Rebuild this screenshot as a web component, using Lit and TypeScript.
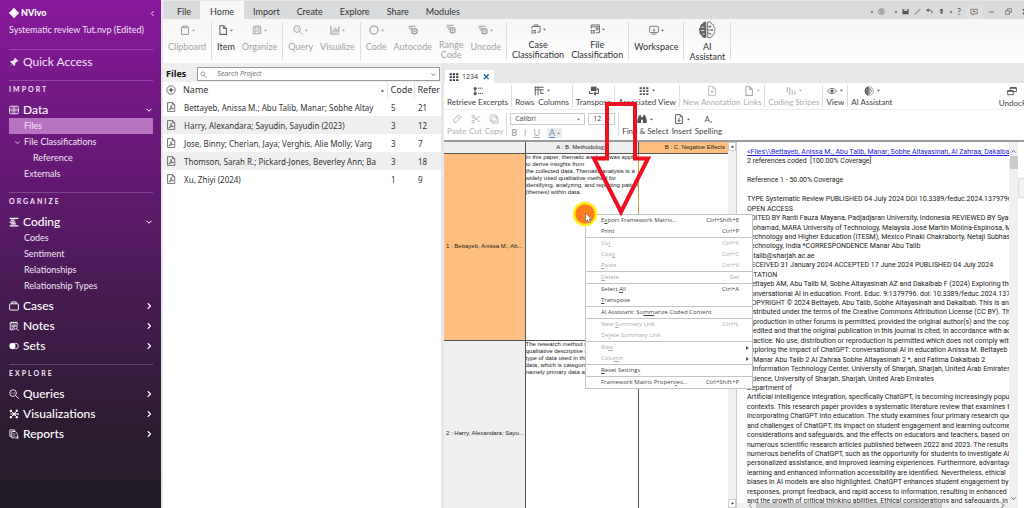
import { LitElement, html, svg, css, nothing, TemplateResult } from "lit";
import { customElement, property } from "lit/decorators.js";
import { classMap } from "lit/directives/class-map.js";

/* ---------- Icons: every glyph is drawn on a 16 x 16 grid ---------- */

const glyphs: Record<string, TemplateResult> = {
  logo: svg`<g fill="none" stroke="currentColor" stroke-width="2.6"><path d="M8 1.5 10.3 4 8 6.3 5.7 4zM8 9.7 10.3 12 8 14.5 5.7 12zM1.5 8 4 5.7 6.3 8 4 10.3zM9.7 8 12 5.7 14.5 8 12 10.3z"/></g>`,
  pin: svg`<path d="M9.5 1 15 6.500 13.600 7.600 12.600 7.300 9.900 10 9.800 13 8.500 14.300 5.300 11 1 15.300 .7 15 4.900 10.700 1.700 7.500 3 6.200 6 6.100 8.700 3.400 8.400 2.300z" fill="currentColor"/>`,
  data: svg`<g fill="none" stroke="currentColor" stroke-width="1.400"><rect x="1" y="2" width="14" height="12" rx="1.500"/><path d="M1 8h14M8 2v12M4 5h2M10 5h2M4 11h2M10 11h2"/></g>`,
  coding: svg`<path d="M1 2h14M1 8h9M1 14h14M3 5h6M3 11h8" stroke="currentColor" stroke-width="2"/>`,
  case: svg`<g fill="none" stroke="currentColor" stroke-width="1.500"><rect x="1" y="4.500" width="14" height="10" rx="1"/><path d="M4.500 4.500V1.500h7v3"/></g>`,
  note: svg`<g fill="none" stroke="currentColor" stroke-width="1.400"><path d="M8 14H2V2.500h11V8M4 1v3M7.500 1v3M11 1v3M4 6.500h7M4 9h4M4 11.500h3"/><circle cx="10.500" cy="10.500" r="2.500"/><path d="m12.500 12.500 3 3"/></g>`,
  sets: svg`<circle cx="5.500" cy="8" r="5" fill="currentColor"/><circle cx="10.500" cy="8" r="4.500" fill="none" stroke="currentColor" stroke-width="1.300"/>`,
  query: svg`<g fill="none" stroke="currentColor" stroke-width="1.400"><circle cx="6.500" cy="6.500" r="5.300"/><path d="m10.500 10.500 5 5M4 6.500h1.200M6 6.500h1.200M8 6.500h1.200"/></g>`,
  network: svg`<g fill="none" stroke="currentColor" stroke-width="1.500"><path d="m3 3 10 10M13 3 3 13M8 8h6M2 8h3"/></g><g fill="currentColor"><circle cx="8" cy="8" r="2.600"/><circle cx="3" cy="3" r="1.900"/><circle cx="12.500" cy="2.800" r="1.900"/><circle cx="3" cy="13" r="1.900"/><circle cx="12.500" cy="13" r="1.900"/><circle cx="14.500" cy="8" r="1.400"/></g>`,
  report: svg`<g fill="none" stroke="currentColor" stroke-width="1.400"><path d="M4 12H1.500V1.500H9V3"/><path d="M4.500 4H10l3 3v2M4.500 4v10H9M7 8h3M7 11h2"/></g><path d="M10.500 12h1.500v3.500h-1.500zM13 10h1.800v5.500H13z" fill="currentColor"/>`,
  down: svg`<path d="m3 5.500 5 5 5-5" fill="none" stroke="currentColor" stroke-width="2"/>`,
  right: svg`<path d="m5.500 2.500 5.500 5.500-5.500 5.500" fill="none" stroke="currentColor" stroke-width="2.200"/>`,
  left: svg`<path d="M10.500 2.500 5.500 8l5 5.500" fill="none" stroke="currentColor" stroke-width="1.800"/>`,
  clipboard: svg`<g fill="none" stroke="currentColor" stroke-width="1.600"><path d="M5 3H2.500v12h11V3H11"/><path d="M5.500 1.500h5v3h-5z"/></g>`,
  page: svg`<g fill="none" stroke="currentColor" stroke-width="1.700"><path d="M3 1.200h6l4.500 4.500v9.300H3z"/><path d="M9 1.200v4.500h4.500"/></g>`,
  organize: svg`<g fill="none" stroke="currentColor" stroke-width="1.300"><path d="M2 3h3v11H2zM5 3V1.500h6V14H5M11 3h3v11h-3M7 4h2M7 7h2M7 10h2"/></g>`,
  bars: svg`<path d="M1.500 1v13.500H15M5 12V7.500M8 12V4M11 12V6.500M14 12V2.500" fill="none" stroke="currentColor" stroke-width="1.700"/>`,
  circle: svg`<circle cx="8" cy="8" r="6.500" fill="none" stroke="currentColor" stroke-width="1.800"/>`,
  autocode: svg`<path d="M1 2h11M1 5h6M3 8h3" stroke="currentColor" stroke-width="1.500"/><circle cx="10.500" cy="10" r="4.200" fill="none" stroke="currentColor" stroke-width="2"/><circle cx="10.500" cy="10" r="1.700" fill="currentColor"/>`,
  range: svg`<path d="M1 2h11M1 5h6M3 8h3" stroke="currentColor" stroke-width="1.500"/><circle cx="10.500" cy="10" r="4.200" fill="none" stroke="currentColor" stroke-width="1.800"/><path d="M8 10h5M10.500 8v4" stroke="currentColor" stroke-width="1.300"/>`,
  uncode: svg`<path d="M1 2h11M1 5h6M3 8h3" stroke="currentColor" stroke-width="1.500"/><circle cx="10.500" cy="10" r="4.200" fill="none" stroke="currentColor" stroke-width="1.800"/><path d="m8.800 8.300 3.400 3.400M12.200 8.300 8.800 11.700" stroke="currentColor" stroke-width="1.400"/>`,
  caseclass: svg`<g fill="none" stroke="currentColor" stroke-width="1.500"><path d="M1.500 7.500V4h13v9H9.500M5 4V1.500h6V4"/></g><path d="M1 9.500h3v2.300H1zM5 9.500h3v2.300H5zM1 13h3v2.300H1zM5 13h3v2.300H5z" fill="currentColor"/>`,
  fileclass: svg`<g fill="none" stroke="currentColor" stroke-width="1.500"><path d="M2 7.500v-6h13V14H9.500M2 4.500h13M11 4.500v6M9 8h6"/></g><path d="M1 9.500h3v2.300H1zM5 9.500h3v2.300H5zM1 13h3v2.300H1zM5 13h3v2.300H5z" fill="currentColor"/>`,
  workspace: svg`<g fill="none" stroke="currentColor" stroke-width="1.300"><rect x="1" y="2" width="14" height="10" rx="1"/><path d="M4 14.500h8M8 5v5M6 8l2 2 2-2"/></g>`,
  brain: svg`<path d="M7.400 1C5.500.3 4.300 1.300 4 2.500 2.300 2.700 1.800 4.100 2.100 5.300.7 6.200.5 8.100 1.400 9.200.8 10.800 1.700 12.300 3.100 12.600c.4 2 2.700 3 4.300 2.100z" fill="currentColor"/><path d="M3 5.500h2.500M2.500 8.500h3M4 11.500h2" stroke="#fbfbfb" stroke-width=".7"/><g fill="none" stroke="currentColor" stroke-width=".8"><path d="M8.600 1c1.900-.7 3.100.3 3.400 1.500 1.700.2 2.200 1.600 1.900 2.800 1.400.9 1.600 2.800.7 3.900.6 1.600-.3 3.100-1.700 3.400-.4 2-2.700 3-4.300 2.100zM8.600 5H11v-1M8.600 8H13M8.600 11h2.600v1.500"/></g><circle cx="11" cy="5" r=".8" fill="currentColor"/><circle cx="12.500" cy="8" r=".8" fill="currentColor"/>`,
  search: svg`<circle cx="6.500" cy="6.500" r="4.500" fill="none" stroke="currentColor" stroke-width="1.300"/><path d="m10 10 5 5" stroke="currentColor" stroke-width="1.600"/>`,
  target: svg`<circle cx="8" cy="8" r="6.700" fill="none" stroke="currentColor" stroke-width="1.300"/><path d="M8 4v8M4 8h8" stroke="currentColor" stroke-width="1.200"/><circle cx="8" cy="8" r="2.300" fill="currentColor"/>`,
  pdf: svg`<g fill="none" stroke="currentColor" stroke-width="1.300"><path d="M2.500 1h8l3.500 3.500V15H2.500zM10.500 1v3.500H14"/><path d="M4.500 12.500C7.500 11 8.500 8 8 5.500c.3 3 2 5 4 5-3-.3-5 .5-7.500 2"/></g>`,
  grid: svg`<path d="M1 2h3.500v3H1zM6.200 2h3.500v3H6.200zM11.500 2H15v3h-3.500zM1 6.700h3.500v3H1zM6.200 6.700h3.500v3H6.200zM11.500 6.700H15v3h-3.500zM1 11.500h3.500v3H1zM6.200 11.500h3.500v3H6.200zM11.500 11.500H15v3h-3.500z" fill="currentColor"/>`,
  close: svg`<path d="m2 3 11 11M13 3 2 14" stroke="currentColor" stroke-width="3"/>`,
  retrieve: svg`<g fill="currentColor"><circle cx="3.500" cy="4" r="2.600"/><circle cx="3.500" cy="12" r="2.600"/></g><path d="M8 3.500h2M11 3.500h2M14 3.500h1.500M8 12h2M11 12h2M14 12h1.500M2 8h3" stroke="currentColor" stroke-width="1.600"/>`,
  columns: svg`<path d="M1 2h14.500M1 6h14.500M2 1v14M6.500 1v14M11 6v6h4" fill="none" stroke="currentColor" stroke-width="1.500"/>`,
  transpose: svg`<path d="M3 1h9v7H3z" fill="currentColor"/><path d="M12 5h3v7H9M11 9l-3 3 3 3M1 8v4h5" fill="none" stroke="currentColor" stroke-width="1.700"/>`,
  annotation: svg`<g fill="none" stroke="currentColor" stroke-width="1.200"><path d="M2.500 1H10l3.500 3.500V15h-11zM10 1v3.500h3.500M8 6.500v5M5.500 9h5"/></g>`,
  stripes: svg`<path d="M2 2v9M6 2v12M10 6v8M14 8v6" stroke="currentColor" stroke-width="1.600"/>`,
  eye: svg`<path d="M.8 8C4 2.500 12 2.500 15.200 8 12 13.500 4 13.500.8 8z" fill="none" stroke="currentColor" stroke-width="1.200"/><circle cx="8" cy="8" r="2.600" fill="currentColor"/>`,
  undock: svg`<path d="M5 3h10v6H5z" fill="none" stroke="currentColor" stroke-width="1.500"/><path d="M5 3h10" stroke="currentColor" stroke-width="2.500"/><path d="M1 7.500h9V14H1z" fill="#fff" stroke="currentColor" stroke-width="1.500"/><path d="M1 8h9" stroke="currentColor" stroke-width="2.500"/>`,
  paste: svg`<path d="M10 1.500 15 5l-3 3-4-4zM8 4 2.500 8.500 4 14l4-1.500L12 8" fill="none" stroke="currentColor" stroke-width="1.300"/>`,
  cut: svg`<g fill="none" stroke="currentColor" stroke-width="1.300"><circle cx="3.500" cy="4" r="2"/><circle cx="3.500" cy="12" r="2"/><path d="M5 5.500 15 13M5 10.500 15 3"/></g>`,
  copy: svg`<g fill="none" stroke="currentColor" stroke-width="1.200"><rect x="1.500" y="1.500" width="10" height="10" rx="1.500"/><rect x="4.500" y="4.500" width="10" height="10" rx="1.500"/></g>`,
  find: svg`<path d="M3 2h3.500v3h3V2H13l2.500 7v5.500H9.500V9h-3v5.500H.5V9z" fill="currentColor"/>`,
  insert: svg`<path d="M2.500 1H10l3.500 3.500V15h-11zM10 1v3.500h3.500M8 6v6M5.500 9.500 8 12l2.500-2.500" fill="none" stroke="currentColor" stroke-width="1.500"/>`,
  user: svg`<g fill="none" stroke="currentColor" stroke-width="1.300"><circle cx="8" cy="8" r="6.500"/><circle cx="8" cy="6.500" r="2.300"/><path d="M4 13c1-3.500 7-3.500 8 0"/></g>`,
  save: svg`<path d="M1 2h3v5h8V2h3v12H1zM6 2h1.500v3H6z" fill="currentColor"/>`,
  pen: svg`<path d="M2 14 13 2l1.500 1.500L3 14.500z" fill="none" stroke="currentColor" stroke-width="1"/>`,
  undo: svg`<path d="M2 5h7c4 0 5 3 5 7" fill="none" stroke="currentColor" stroke-width="2.200"/><path d="M6 .5.5 5 6 9.500z" fill="currentColor"/>`,
  redo: svg`<path d="M5 2h6v5H5zM3.500 8h9L8 14z" fill="currentColor"/>`,
  chat: svg`<path d="M1.500 2.500h13v9H9l-3 3v-3H1.500zM5 7h6M8 4.500v5" fill="none" stroke="currentColor" stroke-width="1.300"/>`,
  minimize: svg`<path d="M2 9h12" stroke="currentColor" stroke-width="1.800"/>`,
  restore: svg`<path d="M1.500 6h8.500v8.500H1.500zM5.500 6V1.500H14.500V10H10" fill="none" stroke="currentColor" stroke-width="1.400"/>`,
};

const icon = (name: string, size = "s10") =>
  html`<svg class="icon ${size}" viewBox="0 0 16 16" aria-hidden="true">${glyphs[name]}</svg>`;

const caret = html`<svg class="caret" viewBox="0 0 4 3" aria-hidden="true"><path d="M0 .5h4L2 2.800z" fill="currentColor" /></svg>`;

const iconStyles = css`
  .icon { display: block; flex: none; }
  .s7 { width: 7px; height: 7px; }
  .s8 { width: 8px; height: 8px; }
  .s10 { width: 10px; height: 10px; }
  .s18 { width: 18px; height: 18px; }
  .caret { display: block; flex: none; width: 3px; height: 3px; }
  * { box-sizing: border-box; }
  button, input, select { font: inherit; color: inherit; background: none; border: 0; margin: 0; padding: 0; border-radius: 0; }
  button { display: block; text-align: left; }
  a { color: inherit; text-decoration: none; }
`;

/* ---------- Sidebar ---------- */

interface NavEntry {
  label: string;
  icon: string;
  children?: { label: string; level?: number; open?: boolean; active?: boolean }[];
}

const sections: { title: string; items: NavEntry[] }[] = [
  {
    title: "IMPORT",
    items: [
      {
        label: "Data",
        icon: "data",
        children: [
          { label: "Files", active: true },
          { label: "File Classifications", open: true },
          { label: "Reference", level: 2 },
          { label: "Externals" },
        ],
      },
    ],
  },
  {
    title: "ORGANIZE",
    items: [
      {
        label: "Coding",
        icon: "coding",
        children: [{ label: "Codes" }, { label: "Sentiment" }, { label: "Relationships" }, { label: "Relationship Types" }],
      },
      { label: "Cases", icon: "case" },
      { label: "Notes", icon: "note" },
      { label: "Sets", icon: "sets" },
    ],
  },
  {
    title: "EXPLORE",
    items: [
      { label: "Queries", icon: "query" },
      { label: "Visualizations", icon: "network" },
      { label: "Reports", icon: "report" },
    ],
  },
];

@customElement("nv-sidebar")
export class NvSidebar extends LitElement {
  static styles = [
    iconStyles,
    css`
      :host {
        display: block;
        padding: 1px 8px 0 9px;
        color: #f1e6f4;
        font: 9px/16px Lato, sans-serif;
        background: linear-gradient(#88189c, #5f1a6e 38%, #431b4d 62%, #2c1b31 84%, #221c26);
        overflow: hidden;
      }
      .brand { display: flex; align-items: center; gap: 2px; height: 24px; font-weight: 900; color: #fff; }
      .brand button { margin-left: auto; margin-right: -3px; }
      .project { height: 24px; line-height: 10px; }
      .rule { height: 1px; border: 0; margin: 0; background: #ffffff33; }
      .quick { display: flex; align-items: center; gap: 4px; height: 24px; font-size: 12px; margin-bottom: 6px; }
      .title { height: 16px; margin: 0 0 5px; font-size: 7px; font-weight: 700; letter-spacing: 2px; }
      .section + .section { margin-top: 10px; }
      .nav { display: flex; align-items: center; gap: 4px; width: 100%; height: 16px; font-size: 12px; font-weight: 500; color: #fff; }
      .nav .chev { margin-left: auto; }
      .entry + .entry { margin-top: 4px; }
      .child { display: flex; align-items: center; height: 16px; padding-left: 15px; }
      .child.level2 { padding-left: 24px; }
      .child.active { background: #b673c0; }
      .child.open { padding-left: 5px; gap: 3px; }
    `,
  ];

  render() {
    return html`
      <div class="brand">${icon("logo")}<span>NVivo</span><button aria-label="Collapse">${icon("left", "s7")}</button></div>
      <div class="project">Systematic review Tut.nvp (Edited)</div>
      <hr class="rule" />
      <a class="quick" href="#">${icon("pin")}<span>Quick Access</span></a>
      ${sections.map(
        (s) => html`<section class="section">
          <hr class="rule" />
          <h2 class="title">${s.title}</h2>
          ${s.items.map(
            (n) => html`<div class="entry">
              <button class="nav">${icon(n.icon)}<span>${n.label}</span><span class="chev">${icon(n.children ? "down" : "right", "s8")}</span></button>
              ${n.children?.map(
                (c) => html`<a href="#" class=${classMap({ child: true, active: !!c.active, open: !!c.open, level2: c.level === 2 })}
                  >${c.open ? icon("down", "s7") : nothing}<span>${c.label}</span></a>`
              )}
            </div>`
          )}
        </section>`
      )}
    `;
  }
}

/* ---------- Ribbon ---------- */

interface Tool {
  label: string;
  icon: string;
  menu?: boolean;
  off?: boolean;
  big?: boolean;
}

const ribbon: Tool[][] = [
  [{ label: "Clipboard", icon: "clipboard", menu: true, off: true }],
  [
    { label: "Item", icon: "page", menu: true },
    { label: "Organize", icon: "organize", menu: true, off: true },
  ],
  [
    { label: "Query", icon: "query", menu: true, off: true },
    { label: "Visualize", icon: "bars", menu: true, off: true },
  ],
  [
    { label: "Code", icon: "circle", menu: true, off: true },
    { label: "Autocode", icon: "autocode", off: true },
    { label: "Range\nCode", icon: "range", off: true },
    { label: "Uncode", icon: "uncode", menu: true, off: true },
  ],
  [
    { label: "Case\nClassification", icon: "caseclass", menu: true },
    { label: "File\nClassification", icon: "fileclass", menu: true },
  ],
  [{ label: "Workspace", icon: "workspace", menu: true }],
  [{ label: "AI\nAssistant", icon: "brain", big: true }],
];

@customElement("nv-ribbon")
export class NvRibbon extends LitElement {
  static styles = [
    iconStyles,
    css`
      :host { display: block; font: 9px/10px Lato, sans-serif; color: #333; }
      .tabs { display: flex; align-items: stretch; gap: 1px; height: 18px; padding-left: 6px; background: #dadbdd; overflow: hidden; }
      .tab { padding: 3px 8px 0; }
      .tab.current { padding: 3px 10px 0; background: #f8f8f8; }
      .quick { display: flex; align-items: center; gap: 5px; margin-left: auto; padding-top: 3px; color: #555; white-space: nowrap; }
      .dot { width: 2px; height: 2px; border-radius: 1px; background: #666; }
      .account { margin-right: 5px; }
      .chat { padding: 3px 4px; background: #e2e1e0; }
      .window { display: flex; align-items: center; gap: 10px; padding-left: 1px; margin-right: -5px; }
      .groups { display: flex; height: 44px; padding: 3px 0; background: linear-gradient(#f6f6f6, #fefefe); }
      .group { display: flex; gap: 7px; padding: 0 5px; border-right: 1px solid #dedede; }
      .tool { display: flex; flex-direction: column; align-items: center; text-align: center; white-space: pre; }
      .pic { display: flex; align-items: center; gap: 2px; height: 16px; margin-bottom: 4px; color: #666; }
      .off .pic { color: #999; }
      .off { color: #a3a3a3; }
    `,
  ];

  render() {
    const tabs = ["File", "Home", "Import", "Create", "Explore", "Share", "Modules"];
    return html`
      <nav class="tabs">
        ${tabs.map((t) => html`<button class=${classMap({ tab: true, current: t === "Home" })}>${t}</button>`)}
        <div class="quick">
          <span class="dot"></span><button class="account" aria-label="Account">${icon("user", "s7")}</button>
          <span class="dot"></span><button aria-label="Save">${icon("save", "s7")}</button>
          <button aria-label="Edit">${icon("pen", "s7")}</button>
          <button aria-label="Undo">${icon("undo", "s7")}</button>
          <button aria-label="Redo">${icon("redo", "s7")}</button>
          <span class="dot"></span><button>?</button>
          <button class="chat" aria-label="Feedback">${icon("chat", "s8")}</button>
          <span class="window">
            <button aria-label="Minimize">${icon("minimize", "s7")}</button>
            <button aria-label="Restore">${icon("restore", "s7")}</button>
            <button aria-label="Close">${icon("close", "s7")}</button>
          </span>
        </div>
      </nav>
      <div class="groups">
        ${ribbon.map(
          (g) => html`<div class="group">
            ${g.map(
              (t) => html`<button class=${classMap({ tool: true, off: !!t.off })}
                ><span class="pic">${icon(t.icon, t.big ? "s18" : "s10")}${t.menu ? caret : nothing}</span><span>${t.label}</span></button>`
            )}
          </div>`
        )}
      </div>
    `;
  }
}

/* ---------- File list ---------- */

const files: [string, number, number][] = [
  ["Bettayeb, Anissa M.; Abu Talib, Manar; Sobhe Altay", 5, 21],
  ["Harry, Alexandara; Sayudin, Sayudin (2023)", 3, 12],
  ["Jose, Binny; Cherian, Jaya; Verghis, Alie Molly; Varg", 3, 7],
  ["Thomson, Sarah R.; Pickard-Jones, Beverley Ann; Ba", 3, 18],
  ["Xu, Zhiyi (2024)", 1, 9],
];

@customElement("nv-files")
export class NvFiles extends LitElement {
  static styles = [
    iconStyles,
    css`
      :host { display: block; background: #fff; font: 8px/18px "Noto Sans", sans-serif; color: #333; overflow: hidden; }
      .head { display: flex; align-items: center; gap: 11px; padding: 4px 1px 1px 3px; background: #efefef; }
      .heading { margin: 0; font: 700 9px/14px "Open Sans", sans-serif; color: #111; }
      .search { display: flex; align-items: center; flex: 1; height: 14px; padding: 0 2px; border: 1px solid #999; background: #fff; color: #666; }
      .search input { flex: 1; min-width: 0; margin-left: 10px; font: italic 7px/12px "Open Sans", sans-serif; outline: 0; }
      .search input::placeholder { color: #666; opacity: 1; }
      .list { width: 100%; border-collapse: collapse; table-layout: fixed; }
      .list th { height: 16px; padding: 0 0 0 3px; text-align: left; font-weight: 400; font-size: 9px; line-height: 16px; white-space: nowrap; }
      .list td { height: 18px; padding: 0 0 0 4px; line-height: 17px; white-space: nowrap; overflow: hidden; }
      .list tbody tr:nth-child(even) { background: #efefef; }
      .list .mark { width: 17px; padding-left: 3px; color: #555; }
      .code, .refer { width: 27px; border-left: 1px solid #e4e4e4; }
      .namehead { display: flex; justify-content: space-between; align-items: center; padding-right: 3px; }
    `,
  ];

  render() {
    return html`
      <header class="head">
        <h2 class="heading">Files</h2>
        <label class="search">${icon("search", "s7")}<input aria-label="Search Project" placeholder="Search Project" />${icon("down", "s7")}</label>
      </header>
      <table class="list">
        <thead>
          <tr>
            <th class="mark">${icon("target")}</th>
            <th><span class="namehead">Name<svg class="caret" viewBox="0 0 4 3"><path d="M0 2.800h4L2 0z" fill="currentColor" /></svg></span></th>
            <th class="code">Code</th>
            <th class="refer">Refer</th>
          </tr>
        </thead>
        <tbody>
          ${files.map(([n, c, r]) => html`<tr><td class="mark">${icon("pdf")}</td><td>${n}</td><td>${c}</td><td>${r}</td></tr>`)}
        </tbody>
      </table>
    `;
  }
}

/* ---------- Matrix toolbars ---------- */

const viewTools: Tool[][] = [
  [{ label: "Retrieve Excerpts", icon: "retrieve" }],
  [{ label: "Rows  Columns", icon: "columns", menu: true }],
  [{ label: "Transpose", icon: "transpose" }],
  [{ label: "Associated View", icon: "grid", menu: true }],
  [
    { label: "New Annotation", icon: "annotation", off: true },
    { label: "Links", icon: "page", menu: true, off: true },
  ],
  [{ label: "Coding Stripes", icon: "stripes", menu: true, off: true }],
  [{ label: "View", icon: "eye", menu: true }],
  [{ label: "AI Assistant", icon: "brain", menu: true }],
];

const toolButton = (t: Tool) => html`<button class=${classMap({ tool: true, off: !!t.off })}
  ><span class="pic">${t.icon === "spelling" ? html`<span>Aₐ</span>` : icon(t.icon)}${t.menu ? caret : nothing}</span><span>${t.label}</span></button>`;

@customElement("nv-toolbars")
export class NvToolbars extends LitElement {
  static styles = [
    iconStyles,
    css`
      :host { display: block; background: #fff; font: 8px/10px Lato, sans-serif; color: #444; overflow: hidden; }
      .row { display: flex; height: 27px; padding: 2px 0; border-bottom: 1px solid #eee; }
      .row.edit { height: 30px; padding: 3px 0; border: 0; }
      .group { display: flex; gap: 3px; padding: 0 3px; border-right: 1px solid #dcdcdc; white-space: pre; }
      .group.open { border: 0; }
      .undock { margin-left: auto; margin-right: -2px; }
      .tool { display: flex; flex-direction: column; align-items: center; }
      .pic { display: flex; align-items: center; gap: 3px; height: 12px; margin-bottom: 1px; color: #555; }
      .off, .off .pic { color: #adadad; }
      .font { display: flex; flex-direction: column; gap: 3px; }
      .line { display: flex; gap: 3px; }
      .drop { display: flex; align-items: center; height: 12px; padding: 0 4px; border: 1px solid #ccc; color: #777; }
      .drop select { appearance: none; font: 7px/10px "Open Sans", sans-serif; color: #444; }
      .family select { width: 62px; }
      .size select { width: 14px; }
      .styles { display: flex; gap: 7px; padding-left: 1px; color: #aaa; font-size: 9px; }
      .bold { font-weight: 700; }
      .italic { font-style: italic; }
      .under { text-decoration: underline; }
      .colour { display: flex; align-items: center; gap: 2px; padding: 0 2px; background: #ececec; color: #888; }
      .letter { color: #5b8fc0; border-bottom: 1px solid #5b8fc0; line-height: 9px; }
    `,
  ];

  render() {
    return html`
      <div class="row">
        ${viewTools.map((g, i) => html`<div class=${classMap({ group: true, open: i === viewTools.length - 1 })}>${g.map(toolButton)}</div>`)}
        <div class="undock">${toolButton({ label: "Undock", icon: "undock" })}</div>
      </div>
      <div class="row edit">
        <div class="group">
          ${toolButton({ label: "Paste", icon: "paste", off: true })}${toolButton({ label: "Cut", icon: "cut", off: true })}${toolButton({ label: "Copy", icon: "copy", off: true })}
        </div>
        <div class="group">
          <div class="font">
            <div class="line">
              <label class="drop family"><select aria-label="Font"><option>Calibri</option></select>${caret}</label>
              <label class="drop size"><select aria-label="Font size"><option>12</option></select>${caret}</label>
            </div>
            <div class="styles">
              <button class="bold">B</button><button class="italic">I</button><button class="under">U</button
              ><button class="colour"><span class="letter">A</span>${caret}</button>
            </div>
          </div>
        </div>
        <div class="group open">
          ${toolButton({ label: "Find & Select", icon: "find", menu: true })}${toolButton({ label: "Insert", icon: "insert", menu: true })}${toolButton({ label: "Spelling", icon: "spelling" })}
        </div>
      </div>
    `;
  }
}

/* ---------- Framework matrix ---------- */

@customElement("nv-matrix")
export class NvMatrix extends LitElement {
  static styles = [
    iconStyles,
    css`
      :host { display: flex; background: #fff; font: 6px/7px "Liberation Sans", sans-serif; color: #222; overflow: hidden; }
      .grid { flex: 1; width: 100%; min-width: 0; align-self: flex-start; border-collapse: collapse; table-layout: fixed; }
      .grid th, .grid td { border: 1px solid #555; border-width: 0 1px 1px 0; font-weight: 400; overflow: hidden; white-space: nowrap; }
      .grid thead th { height: 11px; padding: 0 3px; background: #efefef; text-align: center; }
      .grid thead .pick { background: #ffbf80; border-right: 0; text-align: right; }
      .names { width: 81px; }
      .first { width: 113px; }
      .grid tbody th { padding: 0 0 0 2px; background: #efefef; text-align: left; }
      .grid tbody td { padding: 0; vertical-align: top; white-space: pre; }
      .grid tbody td:last-child { border-right: 0; }
      .grid tr.pick th { background: #ffbf80; }
      .grid tr.pick td { border-right-color: #e09a40; }
      .grid tbody tr { height: 187px; }
      .bar { display: flex; flex-direction: column; flex: none; justify-content: space-between; width: 9px; background: #f0f0f0; border-right: 1px solid #ccc; }
      .bar button { display: flex; align-items: center; justify-content: center; width: 8px; height: 9px; background: #fff; border: 1px solid #ccc; }
    `,
  ];

  render() {
    return html`
      <table class="grid">
        <thead>
          <tr><th class="names"></th><th class="first">A : B. Methodology</th><th class="pick">B : C. Negative Effects</th></tr>
        </thead>
        <tbody>
          <tr class="pick">
            <th>1 : Bettayeb, Anissa M.; Ab...</th>
            <td>${"In this paper, thematic analysis was applied\nto derive insights from\nthe collected data. Thematic analysis is a\nwidely used qualitative method for\nidentifying, analyzing, and reporting patterns\n(themes) within data."}</td>
            <td></td>
          </tr>
          <tr>
            <th>2 : Harry, Alexandara; Sayu...</th>
            <td>${"The research method u\nqualitative descriptive m\ntype of data used in this\ndata, which is categoriz\nnamely primary data and"}</td>
            <td></td>
          </tr>
        </tbody>
      </table>
      <div class="bar">
        <button aria-label="Scroll up"><svg class="caret" viewBox="0 0 4 3"><path d="M0 2.800h4L2 0z" fill="currentColor" /></svg></button>
        <button aria-label="Scroll down">${caret}</button>
      </div>
    `;
  }
}

/* ---------- Coded text ---------- */

const coded = `2 references coded  [100.00% Coverage]

Reference 1 - 50.00% Coverage

TYPE Systematic Review PUBLISHED 04 July 2024 DOI 10.3389/feduc.2024.1379796
OPEN ACCESS
EDITED BY Ranti Fauza Mayana, Padjadjaran University, Indonesia REVIEWED BY Syahrul
Mohamad, MARA University of Technology, Malaysia José Martín Molina-Espinosa, Monterrey
Technology and Higher Education (ITESM), Mexico Pinaki Chakraborty, Netaji Subhas
Technology, India *CORRESPONDENCE Manar Abu Talib
mtalib@sharjah.ac.ae
RECEIVED 31 January 2024 ACCEPTED 17 June 2024 PUBLISHED 04 July 2024
CITATION
Bettayeb AM, Abu Talib M, Sobhe Altayasinah AZ and Dakalbab F (2024) Exploring the
conversational AI in education. Front. Educ. 9:1379796. doi: 10.3389/feduc.2024.1379796
COPYRIGHT © 2024 Bettayeb, Abu Talib, Sobhe Altayasinah and Dakalbab. This is an open
distributed under the terms of the Creative Commons Attribution License (CC BY). The use
reproduction in other forums is permitted, provided the original author(s) and the copyright
credited and that the original publication in this journal is cited, in accordance with accepted
practice. No use, distribution or reproduction is permitted which does not comply with
Exploring the impact of ChatGPT: conversational AI in education Anissa M. Bettayeb 1
*, Manar Abu Talib 2 Al Zahraa Sobhe Altayasinah 2 *, and Fatima Dakalbab 2
1 Information Technology Center, University of Sharjah, Sharjah, United Arab Emirates
Science, University of Sharjah, Sharjah, United Arab Emirates
Department of
Artificial intelligence integration, specifically ChatGPT, is becoming increasingly popular
contexts. This research paper provides a systematic literature review that examines the
incorporating ChatGPT into education. The study examines four primary research questions
and challenges of ChatGPT, its impact on student engagement and learning outcomes,
considerations and safeguards, and the effects on educators and teachers, based on
numerous scientific research articles published between 2022 and 2023. The results
numerous benefits of ChatGPT, such as the opportunity for students to investigate AI
personalized assistance, and improved learning experiences. Furthermore, advantages
learning and enhanced information accessibility are identified. Nevertheless, ethical
biases in AI models are also highlighted. ChatGPT enhances student engagement by
responses, prompt feedback, and rapid access to information, resulting in enhanced
and the growth of critical thinking abilities. Ethical considerations and safeguards, in`;

@customElement("nv-coded-text")
export class NvCodedText extends LitElement {
  static styles = [
    iconStyles,
    css`
      :host { display: flex; background: #fff; overflow: hidden; }
      .main { display: flex; flex-direction: column; flex: 1; min-width: 0; }
      .text { flex: 1; min-height: 0; padding: 6px 0 0 10px; overflow: hidden; white-space: pre; font: 7px/1.35 Roboto, sans-serif; color: #222; }
      .text a { color: #2a20d8; text-decoration: underline; }
      .across { display: flex; align-items: center; gap: 2px; height: 5px; padding: 0 3px 0 10px; background: #f0f0f0; color: #555; overflow: hidden; }
      .across .thumb { width: 72%; height: 5px; background: #c9c9c9; }
      .across .end { margin-left: auto; }
      .bar { display: flex; flex-direction: column; align-items: center; width: 9px; padding: 6px 0; background: #f0f0f0; color: #555; }
      .bar .thumb { width: 8px; height: 13px; margin: 1px 0 auto; background: #c9c9c9; }
      .edge { width: 6px; padding-top: 36px; }
      .handle { display: block; height: 20px; border: 1px solid #ddd; border-right: 0; background: #f2f2f2; }
    `,
  ];

  render() {
    return html`
      <div class="main">
        <div class="text"><a href="#">&lt;Files\\\\Bettayeb, Anissa M.; Abu Talib, Manar; Sobhe Altayasinah, Al Zahraa; Dakalbab</a>
${coded}</div>
        <div class="across">${icon("left", "s7")}<span class="thumb"></span><span class="end">${icon("right", "s7")}</span></div>
      </div>
      <div class="bar">
        <svg class="icon s7" viewBox="0 0 16 16"><path d="m3 10.500 5-5 5 5" fill="none" stroke="currentColor" stroke-width="2" /></svg>
        <span class="thumb"></span>${icon("down", "s7")}
      </div>
      <div class="edge"><span class="handle"></span></div>
    `;
  }
}

/* ---------- Context menu ---------- */

interface MenuItem {
  text: string;
  key?: string;
  hint?: string;
  off?: boolean;
  sub?: boolean;
}

const menu: MenuItem[][] = [
  [
    { text: "Export Framework Matrix...", key: "x", hint: "Ctrl+Shift+E" },
    { text: "Print", hint: "Ctrl+P" },
  ],
  [
    { text: "Cut", key: "t", hint: "Ctrl+X", off: true },
    { text: "Copy", key: "y", hint: "Ctrl+C", off: true },
    { text: "Paste", key: "P", hint: "Ctrl+V", off: true },
  ],
  [{ text: "Delete", key: "D", hint: "Del", off: true }],
  [
    { text: "Select All", key: "A", hint: "Ctrl+A" },
    { text: "Transpose", key: "T" },
  ],
  [{ text: "AI Assistant: Summarize Coded Content", key: "mm" }],
  [
    { text: "New Summary Link", key: "S", hint: "Ctrl+L", off: true },
    { text: "Delete Summary Link", key: "l", off: true },
  ],
  [
    { text: "Row", key: "w", off: true, sub: true },
    { text: "Column", key: "m", off: true, sub: true },
  ],
  [{ text: "Reset Settings", key: "R" }],
  [{ text: "Framework Matrix Properties...", key: "i", hint: "Ctrl+Shift+P" }],
];

const underlined = ({ text, key }: MenuItem) => {
  if (!key) return text;
  const at = key === "i" ? text.lastIndexOf("i") : text.indexOf(key);
  return html`${text.slice(0, at)}<u>${key}</u>${text.slice(at + key.length)}`;
};

@customElement("nv-context-menu")
export class NvContextMenu extends LitElement {
  @property({ attribute: false }) groups: MenuItem[][] = menu;

  static styles = [
    iconStyles,
    css`
      :host { display: block; width: 168px; border: 1px solid #c4c4c4; background: #fff; font: 6px/11px "Open Sans", sans-serif; color: #444; }
      .group + .group { border-top: 1px solid #c4c4c4; }
      .item { display: flex; justify-content: space-between; width: 100%; height: 11px; padding: 0 13px 0 15px; white-space: nowrap; }
      .off { color: #aaa; }
      .sub { align-items: center; padding-right: 3px; }
      .arrow { width: 3px; height: 4px; color: #555; }
    `,
  ];

  render() {
    return this.groups.map(
      (g) => html`<div class="group" role="menu">
        ${g.map(
          (m) => html`<button role="menuitem" class=${classMap({ item: true, off: !!m.off, sub: !!m.sub })}
            ><span>${underlined(m)}</span>${m.hint ? html`<span>${m.hint}</span>` : nothing}${m.sub
              ? html`<svg class="arrow" viewBox="0 0 3 4"><path d="M0 0v4l3-2z" fill="currentColor" /></svg>`
              : nothing}</button>`
        )}
      </div>`
    );
  }
}

/* ---------- Application window ---------- */

@customElement("app-root")
export class AppRoot extends LitElement {
  static styles = [
    iconStyles,
    css`
      :host { position: relative; display: grid; grid-template-columns: 161px minmax(0, 1fr); gap: 2px; height: 100vh; overflow: hidden; background: #e6e7e9; }
      .main { display: flex; flex-direction: column; min-height: 0; padding-top: 1px; }
      .work { display: grid; grid-template-columns: 278px minmax(0, 1fr); gap: 3px; flex: 1; min-height: 0; }
      .pane { display: flex; flex-direction: column; min-height: 0; min-width: 0; }
      .tabs { display: flex; align-items: flex-end; height: 20px; padding-left: 1px; }
      .tab { display: flex; align-items: center; gap: 3px; height: 13px; padding: 0 4px; background: #fff; font: 7px/13px "Open Sans", sans-serif; color: #333; }
      .tab .x { color: #1f5f9f; margin-left: 2px; }
      .split { display: grid; grid-template-columns: 293px minmax(0, 1fr); flex: 1; min-height: 0; border-top: 2px solid #999; }
      .menu { position: absolute; left: 585px; top: 214px; }
      .marks { position: absolute; left: 560px; top: 90px; width: 110px; height: 150px; pointer-events: none; }
    `,
  ];

  render() {
    return html`
      <nv-sidebar></nv-sidebar>
      <div class="main">
        <nv-ribbon></nv-ribbon>
        <div class="work">
          <nv-files></nv-files>
          <div class="pane">
            <div class="tabs">
              <div class="tab">${icon("grid", "s10")}<span>1234</span><button class="x" aria-label="Close tab">${icon("close", "s7")}</button></div>
            </div>
            <nv-toolbars></nv-toolbars>
            <div class="split">
              <nv-matrix></nv-matrix>
              <nv-coded-text></nv-coded-text>
            </div>
          </div>
        </div>
      </div>
      <nv-context-menu class="menu"></nv-context-menu>
      <svg class="marks" viewBox="560 90 110 150" aria-hidden="true">
        <circle cx="585" cy="214" r="11" fill="#ff7f1e" stroke="#ffee1a" stroke-width="2.500" />
        <path d="M585.500 213v8.500l2-1.800 1.500 3.300 1.500-.7-1.500-3.100h2.700z" fill="#fff" stroke="#555" stroke-width=".6" />
        <path d="M607 104h28v54.500h13L621 212l-27-53.500h13z" fill="none" stroke="#ec1020" stroke-width="4" />
      </svg>
    `;
  }
}
